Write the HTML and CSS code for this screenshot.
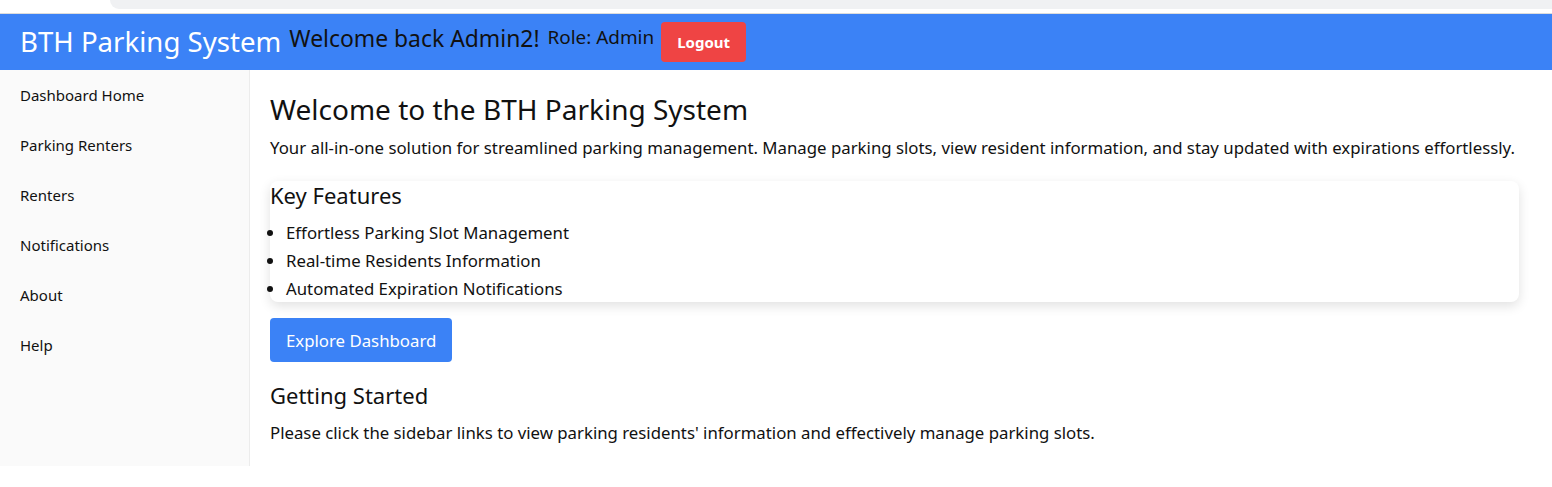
FILE: index.html
```html
<!DOCTYPE html>
<html lang="en">
<head>
<meta charset="utf-8">
<title>BTH Parking System</title>
<link rel="stylesheet" href="styles.css">
</head>
<body>
<div class="chrome"><div class="chrome-tab"></div></div>
<header class="topbar">
  <h1 class="brand">BTH Parking System</h1>
  <span class="welcome">Welcome back Admin2!</span>
  <span class="role">Role: Admin</span>
  <button class="logout">Logout</button>
</header>
<div class="layout">
  <aside class="sidebar">
    <nav class="nav">
      <a class="nav-link" href="#">Dashboard Home</a>
      <a class="nav-link" href="#">Parking Renters</a>
      <a class="nav-link" href="#">Renters</a>
      <a class="nav-link" href="#">Notifications</a>
      <a class="nav-link" href="#">About</a>
      <a class="nav-link" href="#">Help</a>
    </nav>
  </aside>
  <main class="content">
    <h2 class="page-title">Welcome to the BTH Parking System</h2>
    <p class="lead">Your all-in-one solution for streamlined parking management. Manage parking slots, view resident information, and stay updated with expirations effortlessly.</p>
    <section class="card">
      <h3 class="section-title">Key Features</h3>
      <ul class="features">
        <li>Effortless Parking Slot Management</li>
        <li>Real-time Residents Information</li>
        <li>Automated Expiration Notifications</li>
      </ul>
    </section>
    <button class="primary">Explore Dashboard</button>
    <h3 class="section-title started">Getting Started</h3>
    <p class="note">Please click the sidebar links to view parking residents' information and effectively manage parking slots.</p>
  </main>
</div>
</body>
</html>
```
FILE: styles.css
```css
* { box-sizing: border-box; }
body {
  margin: 0;
  font-family: "Noto Sans", "Open Sans", sans-serif;
  color: #111;
  background: #fff;
}
.chrome {
  height: 14px;
  background: #fff;
  border-bottom: 1px solid #dcdcdc;
  padding-left: 110px;
}
.chrome-tab {
  height: 9px;
  background: #f0f1f3;
  border-bottom-left-radius: 10px;
}
.topbar {
  height: 56px;
  background: #3b82f6;
  display: flex;
  align-items: flex-start;
  padding-left: 20px;
}
.brand {
  margin: 9px 0 0;
  font-weight: 400;
  font-size: 27.6px;
  color: #fff;
  line-height: 36px;
}
.welcome {
  margin: 10px 0 0 8px;
  font-size: 22.9px;
  line-height: 30px;
  color: #111;
}
.role {
  margin: 11px 0 0 8px;
  font-size: 18.9px;
  line-height: 24px;
  color: #111;
}
.logout {
  margin: 8px 0 0 7px;
  width: 85px;
  height: 40px;
  background: #ef4444;
  color: #fff;
  border: 0;
  border-radius: 4px;
  font-family: inherit;
  font-weight: 700;
  font-size: 15px;
}
.layout {
  display: flex;
}
.sidebar {
  width: 250px;
  height: 396px;
  background: #fafafa;
  border-right: 1px solid #ececec;
}
.nav {
  display: flex;
  flex-direction: column;
}
.nav-link {
  display: block;
  padding: 15px 20px;
  line-height: 20px;
  font-size: 15px;
  color: #111;
  text-decoration: none;
}
.content {
  flex: 1;
  padding: 21px 33px 0 20px;
}
.page-title {
  margin: 0;
  font-weight: 400;
  font-size: 28px;
  line-height: 36px;
}
.lead {
  margin: 9px 0 0;
  font-size: 16.8px;
  line-height: 24px;
}
.card {
  margin-top: 21px;
  background: #fff;
  border-radius: 8px;
  box-shadow: 0 4px 12px rgba(0, 0, 0, 0.12);
  height: 121px;
}
.section-title {
  margin: 0;
  font-weight: 400;
  font-size: 22px;
  line-height: 28px;
}
.features {
  margin: 10px 0 0;
  padding-left: 16px;
  font-size: 16.8px;
  line-height: 28px;
}
.primary {
  margin-top: 16px;
  height: 44px;
  padding: 0 16px;
  background: #3b82f6;
  color: #fff;
  border: 0;
  border-radius: 4px;
  font-family: inherit;
  font-size: 16.8px;
}
.started {
  margin-top: 19px;
}
.note {
  margin: 12px 0 0;
  font-size: 16.8px;
  line-height: 24px;
}
```
